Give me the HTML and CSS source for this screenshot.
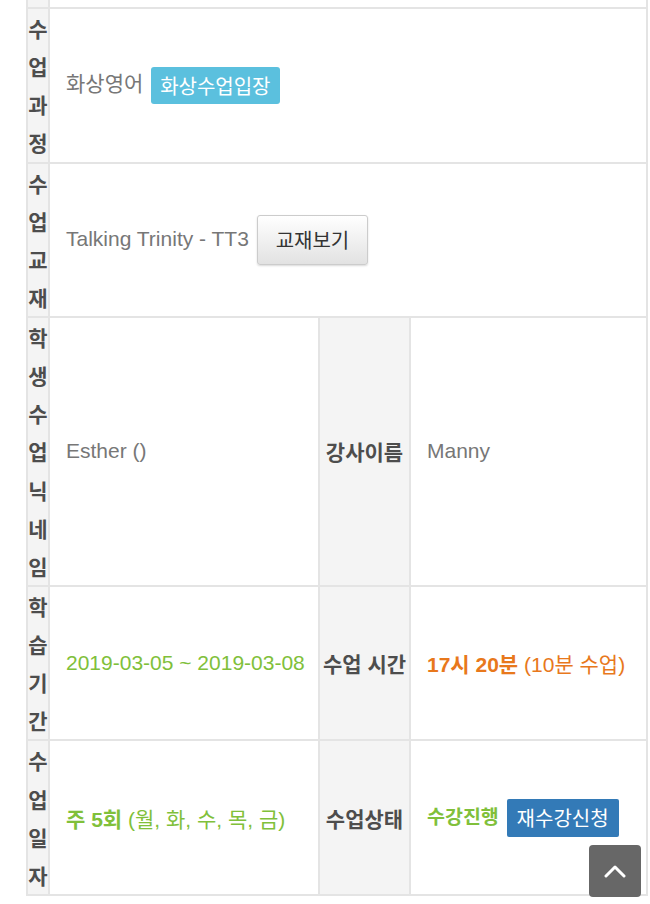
FILE: index.html
```html
<!DOCTYPE html>
<html lang="ko">

<head>
    <meta charset="UTF-8">
    <meta name="viewport" content="width=device-width, initial-scale=1.0">
    <title>수업 정보</title>
    <link rel="stylesheet" href="styles.css">
</head>

<body>
    <div class="class-info">
        <table class="info-table">
            <colgroup>
                <col class="col-label">
                <col class="col-value">
                <col class="col-label2">
                <col class="col-value2">
            </colgroup>
            <tr class="row-cut">
                <th></th>
                <td colspan="3"></td>
            </tr>
            <tr>
                <th class="v-label">수업과정</th>
                <td colspan="3">화상영어 <a class="btn btn-info">화상수업입장</a></td>
            </tr>
            <tr>
                <th class="v-label">수업교재</th>
                <td colspan="3">Talking Trinity - TT3 <a class="btn btn-default">교재보기</a></td>
            </tr>
            <tr>
                <th class="v-label">학생수업닉네임</th>
                <td>Esther ()</td>
                <th class="h-label">강사이름</th>
                <td>Manny</td>
            </tr>
            <tr>
                <th class="v-label">학습기간</th>
                <td class="text-green">2019-03-05 ~ 2019-03-08</td>
                <th class="h-label">수업 시간</th>
                <td class="text-orange"><b>17시 20분</b> (10분 수업)</td>
            </tr>
            <tr>
                <th class="v-label">수업일자</th>
                <td class="text-green"><b>주 5회</b> (월, 화, 수, 목, 금)</td>
                <th class="h-label">수업상태</th>
                <td><b class="text-green status">수강진행</b> <a class="btn btn-primary">재수강신청</a></td>
            </tr>
        </table>
    </div>

    <!-- scroll to top -->
    <a class="go-top">
        <svg width="22" height="14" viewBox="0 0 22 14">
            <path d="M2 12 L11 3 L20 12" fill="none" stroke="#fff" stroke-width="3" stroke-linecap="round" stroke-linejoin="round" />
        </svg>
    </a>
</body>

</html>
```

FILE: styles.css
```css
/* Page */
body {
    margin: 0;
    background-color: #fff;
    font-family: "Liberation Sans", "Noto Sans CJK KR", sans-serif;
}

.class-info {
    padding-left: 26px;
}

/* Table */
.info-table {
    width: 620px;
    table-layout: fixed;
    border-collapse: collapse;
}

.col-label {
    width: 22px;
}

.col-value {
    width: 270px;
}

.col-label2 {
    width: 91px;
}

.col-value2 {
    width: 237px;
}

.info-table th,
.info-table td {
    border: 2px solid #e4e4e4;
    padding: 0;
}

.info-table th {
    background-color: #f4f4f4;
    color: #4d4d4d;
    font-size: 21px;
    font-weight: bold;
    font-family: "Noto Sans CJK KR", sans-serif;
}

.info-table td {
    padding: 0 16px;
    color: #777;
    font-size: 21px;
    white-space: nowrap;
    vertical-align: middle;
}

.row-cut th,
.row-cut td {
    height: 7px;
    border-top: none;
}

.v-label {
    line-height: 38.12px;
    word-break: break-all;
    text-align: center;
    vertical-align: top;
}

.h-label {
    text-align: center;
    white-space: nowrap;
}

.text-green {
    color: #80c03a;
}

.info-table td.text-green {
    color: #80c03a;
}

.info-table td.text-orange {
    color: #e8781c;
}

b {
    font-weight: bold;
}

.status {
    font-size: 19.5px;
}

/* Buttons */
.btn {
    display: inline-block;
    vertical-align: middle;
    font-family: "Noto Sans CJK KR", sans-serif;
    font-size: 20px;
    border-radius: 3px;
    margin-left: 2px;
    cursor: pointer;
}

.btn-info {
    background-color: #5bc0de;
    color: #fff;
    padding: 0 9px;
    line-height: 37px;
}

.btn-default {
    background: linear-gradient(#fff, #e2e2e2);
    color: #333;
    border: 1px solid #ccc;
    padding: 0 18px;
    line-height: 48px;
    box-shadow: 0 1px 2px rgba(0, 0, 0, 0.15);
}

.btn-primary {
    background-color: #337ab7;
    color: #fff;
    padding: 0 10px;
    line-height: 38px;
    border-radius: 2px;
}

/* Scroll to top */
.go-top {
    position: fixed;
    right: 9px;
    bottom: 7px;
    width: 52px;
    height: 52px;
    background-color: #676767;
    border-radius: 4px;
    display: flex;
    align-items: center;
    justify-content: center;
}
```
